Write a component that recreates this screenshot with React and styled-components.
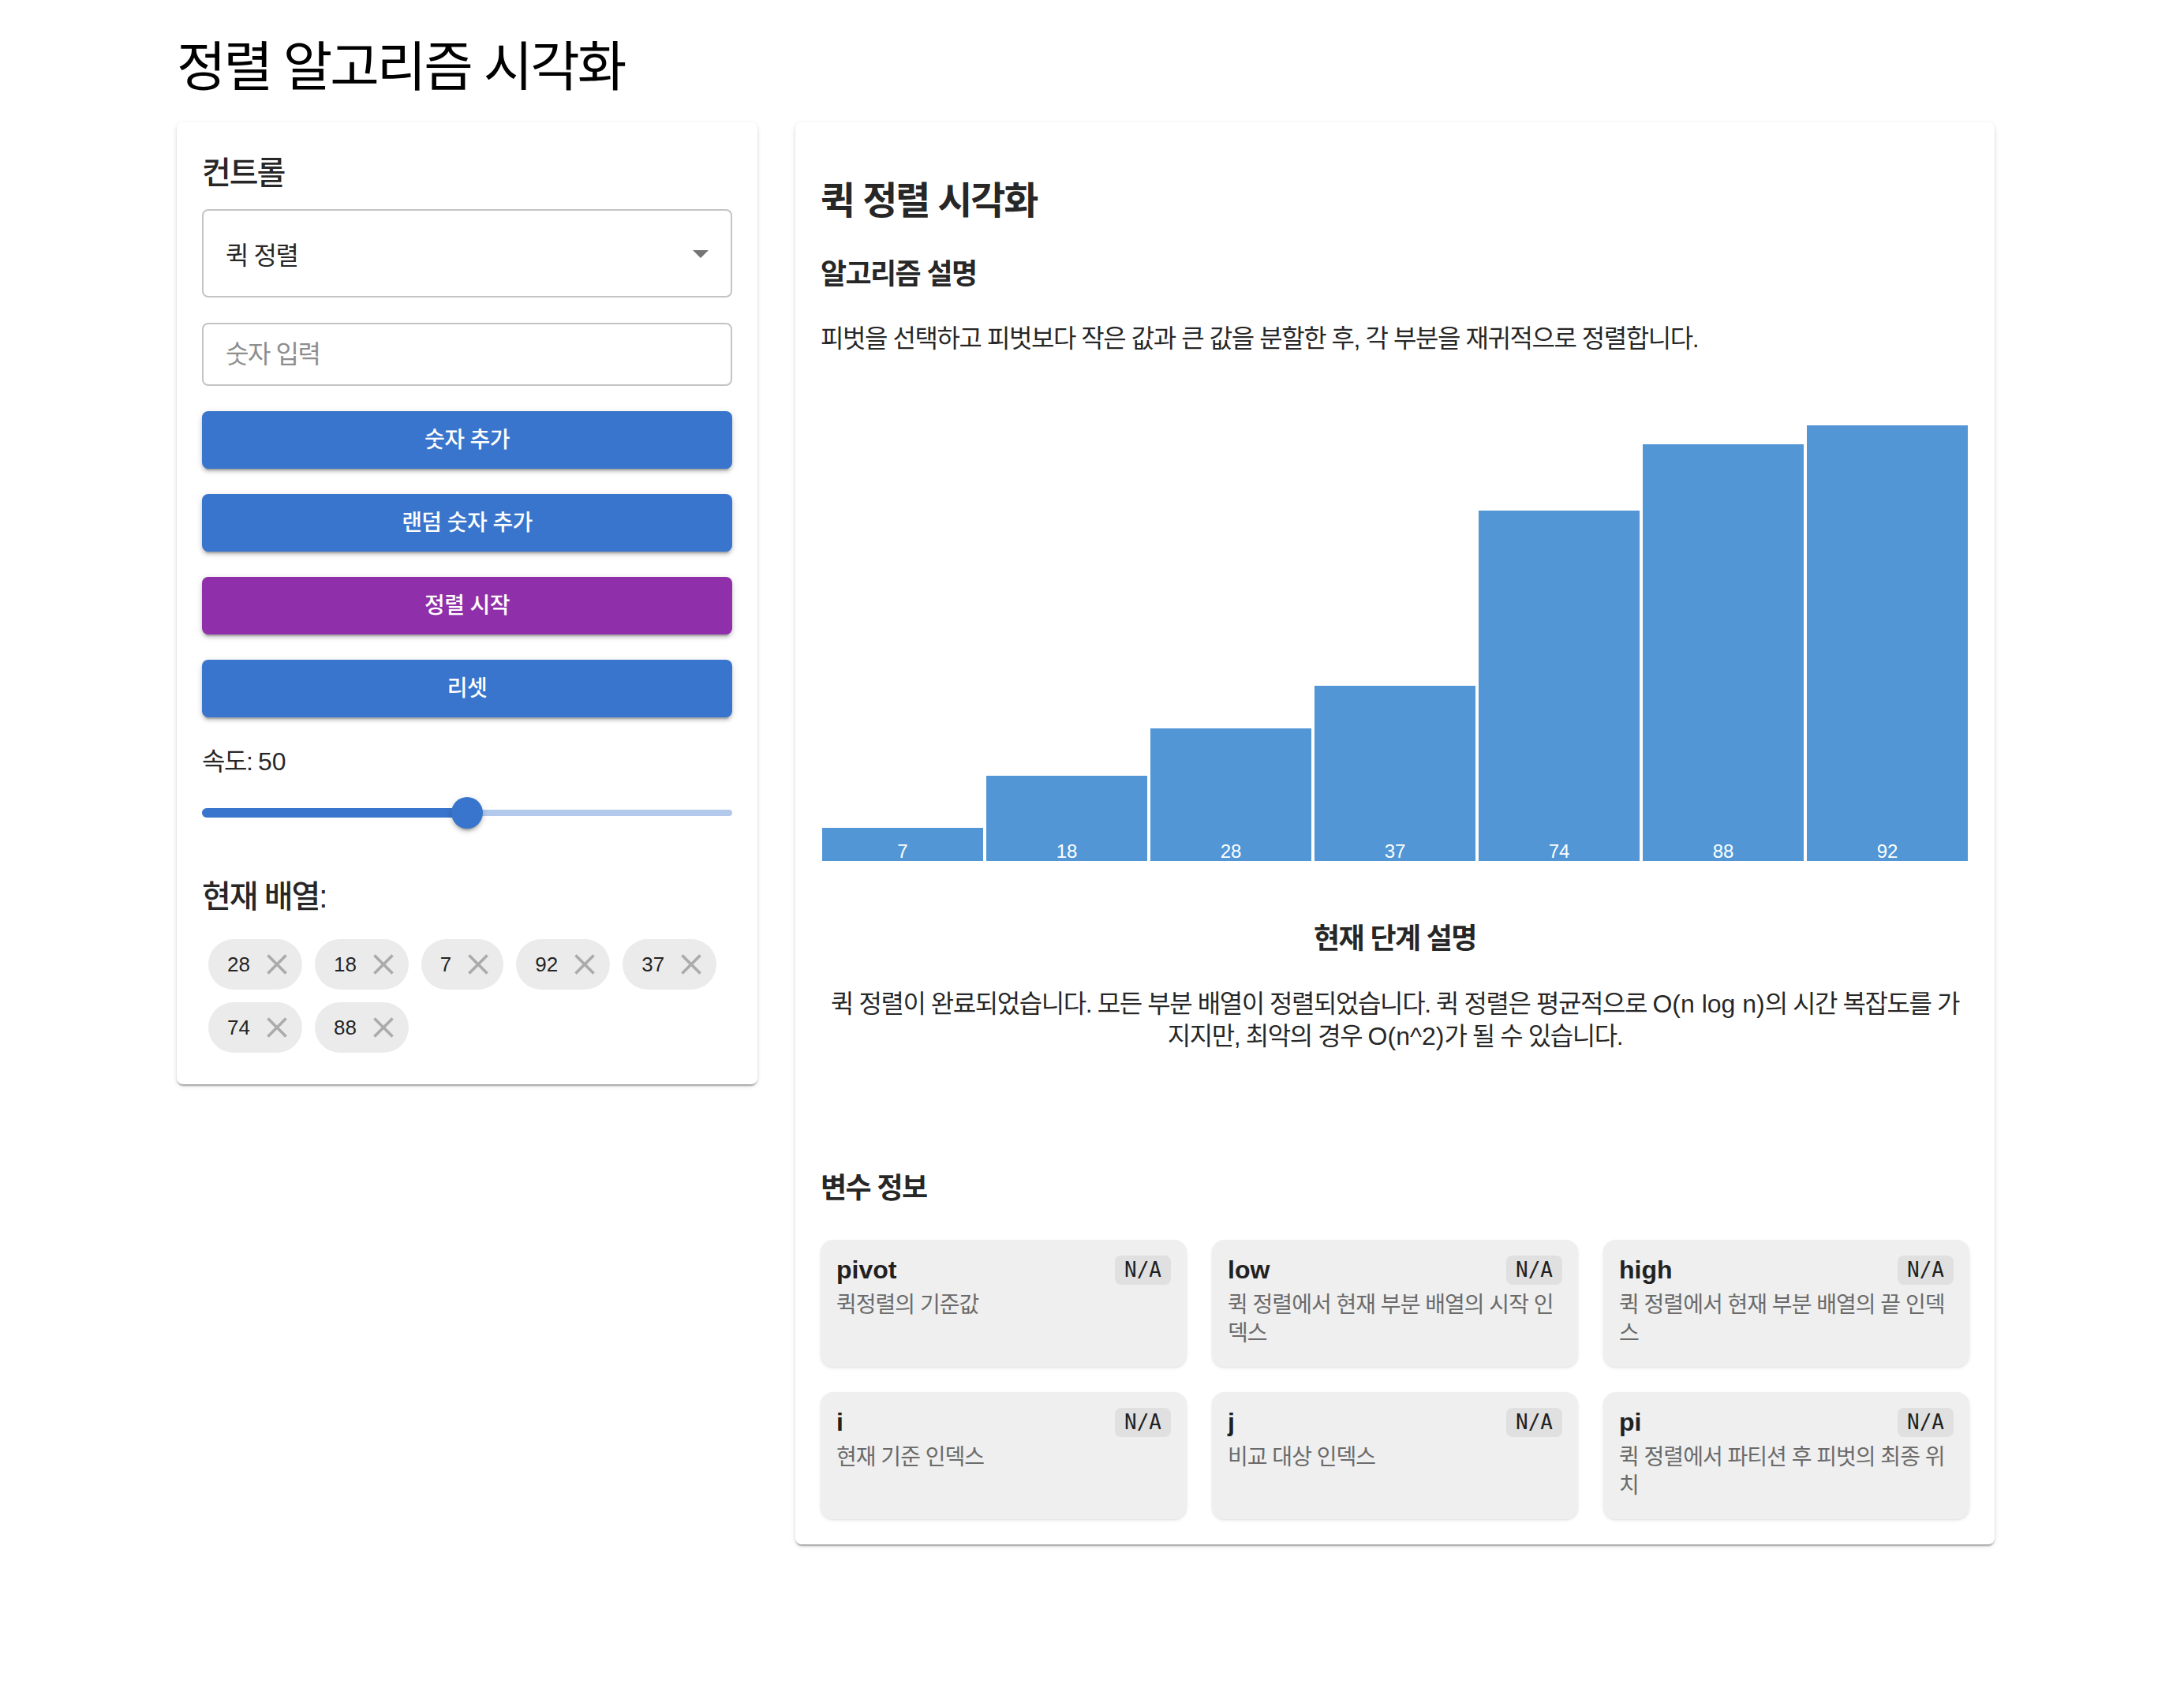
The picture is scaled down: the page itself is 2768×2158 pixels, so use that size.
import React from "react";
import styled, { createGlobalStyle } from "styled-components";

const GlobalStyle = createGlobalStyle`
  html, body { margin: 0; padding: 0; background: #ffffff; }
  body {
    font-family: "Liberation Sans", "Noto Sans CJK KR", sans-serif;
    color: #000;
  }
  * { box-sizing: border-box; }
`;

const Page = styled.div`
  width: 2304px;
  margin: 0 0 0 224px;
  padding: 43px 0 200px;
`;

const PageTitle = styled.h1`
  margin: 0 0 28px;
  font-size: 68px;
  line-height: 84px;
  font-weight: 400;
  letter-spacing: -0.045em;
  color: #000;
`;

const Layout = styled.div`
  display: grid;
  grid-template-columns: 736px 1520px;
  gap: 48px;
  align-items: start;
`;

const Card = styled.section`
  background: #fff;
  border-radius: 8px;
  padding: 32px;
  color: rgba(0, 0, 0, 0.87);
  box-shadow: 0px 4px 2px -2px rgba(0, 0, 0, 0.2),
    0px 2px 2px 0px rgba(0, 0, 0, 0.14), 0px 2px 6px 0px rgba(0, 0, 0, 0.12);
`;

const Latin = styled.span`
  letter-spacing: 0;
`;

/* ---------- left panel ---------- */

const PanelTitle = styled.h2`
  margin: ${(p) => (p.$top ? `${p.$top}px` : "0")} 0 14px;
  font-size: 40px;
  line-height: 64px;
  font-weight: 500;
  letter-spacing: -0.05em;
`;

const SelectBox = styled.div`
  height: 112px;
  border: 2px solid #c4c4c4;
  border-radius: 8px;
  padding: 0 14px 0 28px;
  display: flex;
  align-items: center;
  justify-content: space-between;
  font-size: 32px;
  letter-spacing: -0.045em;
  margin-bottom: 32px;
`;

const ArrowIcon = styled.svg`
  width: 48px;
  height: 48px;
  fill: rgba(0, 0, 0, 0.54);
`;

const NumberInput = styled.input`
  display: block;
  width: 100%;
  height: 80px;
  border: 2px solid #c4c4c4;
  border-radius: 8px;
  padding: 0 28px;
  margin: 0 0 32px;
  font: inherit;
  font-size: 32px;
  letter-spacing: -0.045em;
  outline: none;
  &::placeholder {
    color: #8e8e8e;
    opacity: 1;
  }
`;

const ActionButton = styled.button`
  display: block;
  width: 100%;
  height: 73px;
  border: none;
  border-radius: 8px;
  margin: 0 0 32px;
  background: ${(p) => p.$color};
  color: #fff;
  font: inherit;
  font-size: 28px;
  font-weight: 500;
  letter-spacing: -0.02em;
  line-height: 49px;
  cursor: pointer;
  box-shadow: 0px 6px 2px -4px rgba(0, 0, 0, 0.2),
    0px 4px 4px 0px rgba(0, 0, 0, 0.14), 0px 2px 10px 0px rgba(0, 0, 0, 0.12);
`;

const SpeedLabel = styled.div`
  font-size: 32px;
  line-height: 48px;
  letter-spacing: -0.045em;
  margin-bottom: 11px;
`;

const SliderRoot = styled.div`
  position: relative;
  height: 60px;
`;

const SliderRail = styled.div`
  position: absolute;
  left: 0;
  right: 0;
  top: 26px;
  height: 8px;
  border-radius: 4px;
  background: #b3c9eb;
`;

const SliderTrack = styled.div`
  position: absolute;
  left: 0;
  top: 24px;
  height: 12px;
  border-radius: 6px;
  background: #3975cc;
`;

const SliderThumb = styled.div`
  position: absolute;
  top: 10px;
  width: 40px;
  height: 40px;
  margin-left: -20px;
  border-radius: 50%;
  background: #3975cc;
  box-shadow: 0px 6px 2px -4px rgba(0, 0, 0, 0.2),
    0px 4px 4px 0px rgba(0, 0, 0, 0.14), 0px 2px 10px 0px rgba(0, 0, 0, 0.12);
`;

const ChipList = styled.div`
  display: flex;
  flex-wrap: wrap;
`;

const Chip = styled.div`
  display: inline-flex;
  align-items: center;
  height: 64px;
  margin: 8px;
  border-radius: 32px;
  background: #ebebeb;
  font-size: 26px;
  color: rgba(0, 0, 0, 0.87);
`;

const ChipLabel = styled.span`
  padding: 0 24px;
`;

const ChipDelete = styled.svg`
  width: 44px;
  height: 44px;
  margin: 0 10px 0 -12px;
  fill: #ababab;
`;

/* ---------- right panel ---------- */

const VizTitle = styled.h2`
  margin: 36px 0 17px;
  font-size: 48px;
  line-height: 64px;
  font-weight: 700;
  letter-spacing: -0.045em;
`;

const SubHeading = styled.h3`
  margin: ${(p) => p.$mt || 0}px 0 ${(p) => p.$mb || 0}px;
  font-size: 36px;
  line-height: 58px;
  font-weight: 700;
  letter-spacing: -0.045em;
  text-align: ${(p) => (p.$center ? "center" : "left")};
`;

const BodyText = styled.p`
  margin: 0;
  font-size: 32px;
  line-height: ${(p) => p.$lh || 48}px;
  letter-spacing: -0.045em;
  text-align: ${(p) => (p.$center ? "center" : "left")};
`;

const Chart = styled.div`
  display: flex;
  align-items: flex-end;
  height: 600px;
  margin-top: 38px;
`;

const Bar = styled.div`
  flex: 1;
  margin: 0 2px;
  background: #5296d5;
  display: flex;
  align-items: flex-end;
  justify-content: center;
  color: #fff;
  font-size: 24px;
  line-height: 24px;
`;

const StepSection = styled.div`
  margin-top: 70px;
`;

const VarGrid = styled.div`
  display: grid;
  grid-template-columns: repeat(3, 1fr);
  gap: 32px;
  margin-top: 36px;
`;

const VarCard = styled.div`
  background: #efefef;
  border-radius: 16px;
  padding: 20px 20px 24px;
  box-shadow: 0px 2px 4px rgba(0, 0, 0, 0.08), 0px 1px 2px rgba(0, 0, 0, 0.05);
`;

const VarHead = styled.div`
  display: flex;
  justify-content: space-between;
  align-items: center;
`;

const VarName = styled.span`
  font-size: 32px;
  line-height: 37px;
  font-weight: 700;
  color: #212121;
`;

const Badge = styled.span`
  font-family: "DejaVu Sans Mono", "Liberation Mono", monospace;
  font-size: 26px;
  line-height: 29px;
  padding: 4px 12px;
  border-radius: 8px;
  background: #e0e0e0;
  color: #212121;
`;

const VarDesc = styled.div`
  margin-top: 8px;
  font-size: 28px;
  line-height: 36px;
  letter-spacing: -0.035em;
  color: #6b6b6b;
`;

const chipValues = [28, 18, 7, 92, 37, 74, 88];
const sorted = [7, 18, 28, 37, 74, 88, 92];
const variables = [
  { name: "pivot", desc: "퀵정렬의 기준값" },
  { name: "low", desc: "퀵 정렬에서 현재 부분 배열의 시작 인덱스" },
  { name: "high", desc: "퀵 정렬에서 현재 부분 배열의 끝 인덱스" },
  { name: "i", desc: "현재 기준 인덱스" },
  { name: "j", desc: "비교 대상 인덱스" },
  { name: "pi", desc: "퀵 정렬에서 파티션 후 피벗의 최종 위치" },
];

export default function App() {
  return (
    <>
      <GlobalStyle />
      <Page>
        <PageTitle>정렬 알고리즘 시각화</PageTitle>
        <Layout>
          <Card>
            <PanelTitle>컨트롤</PanelTitle>
            <SelectBox>
              <span>퀵 정렬</span>
              <ArrowIcon viewBox="0 0 24 24">
                <path d="M7 10l5 5 5-5z" />
              </ArrowIcon>
            </SelectBox>
            <NumberInput placeholder="숫자 입력" />
            <ActionButton $color="#3975cc">숫자 추가</ActionButton>
            <ActionButton $color="#3975cc">랜덤 숫자 추가</ActionButton>
            <ActionButton $color="#8f2fa9">정렬 시작</ActionButton>
            <ActionButton $color="#3975cc">리셋</ActionButton>
            <SpeedLabel>
              속도: <Latin>50</Latin>
            </SpeedLabel>
            <SliderRoot>
              <SliderRail />
              <SliderTrack style={{ width: "50%" }} />
              <SliderThumb style={{ left: "50%" }} />
            </SliderRoot>
            <PanelTitle $top={44}>현재 배열:</PanelTitle>
            <ChipList>
              {chipValues.map((v, i) => (
                <Chip key={i}>
                  <ChipLabel>{v}</ChipLabel>
                  <ChipDelete viewBox="0 0 24 24">
                    <path d="M19 6.41 17.59 5 12 10.59 6.41 5 5 6.41 10.59 12 5 17.59 6.41 19 12 13.41 17.59 19 19 17.59 13.41 12z" />
                  </ChipDelete>
                </Chip>
              ))}
            </ChipList>
          </Card>

          <Card>
            <VizTitle>퀵 정렬 시각화</VizTitle>
            <SubHeading $mt={32} $mb={28}>
              알고리즘 설명
            </SubHeading>
            <BodyText>
              피벗을 선택하고 피벗보다 작은 값과 큰 값을 분할한 후, 각 부분을
              재귀적으로 정렬합니다.
            </BodyText>
            <Chart>
              {sorted.map((v) => (
                <Bar key={v} style={{ height: `${v * 6}px` }}>
                  {v}
                </Bar>
              ))}
            </Chart>
            <StepSection>
              <SubHeading $center $mb={33}>
                현재 단계 설명
              </SubHeading>
              <BodyText $center $lh={41}>
                퀵 정렬이 완료되었습니다. 모든 부분 배열이 정렬되었습니다. 퀵
                정렬은 평균적으로 <Latin>O(n log n)</Latin>의 시간 복잡도를
                가지지만, 최악의 경우 <Latin>O(n^2)</Latin>가 될 수 있습니다.
              </BodyText>
            </StepSection>
            <SubHeading $mt={143}>변수 정보</SubHeading>
            <VarGrid>
              {variables.map((v) => (
                <VarCard key={v.name}>
                  <VarHead>
                    <VarName>{v.name}</VarName>
                    <Badge>N/A</Badge>
                  </VarHead>
                  <VarDesc>{v.desc}</VarDesc>
                </VarCard>
              ))}
            </VarGrid>
          </Card>
        </Layout>
      </Page>
    </>
  );
}
